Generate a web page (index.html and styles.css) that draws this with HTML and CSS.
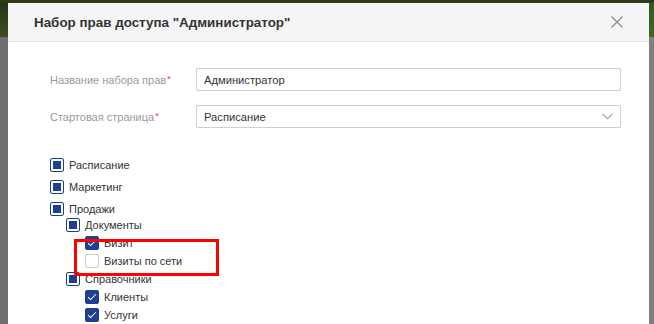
FILE: index.html
```html
<!DOCTYPE html>
<html lang="ru">
<head>
<meta charset="UTF-8">
<title>Набор прав доступа</title>
<link rel="stylesheet" href="styles.css">
</head>
<body>

<div class="backdrop">
  <div class="side side-left"></div>

  <div class="modal">
    <!-- Modal header -->
    <div class="modal-header">
      <h2 class="modal-title">Набор прав доступа "Администратор"</h2>
      <span class="close">
        <svg width="12" height="12" viewBox="0 0 12 12"><path d="M0.5 0.5 L11.5 11.5 M11.5 0.5 L0.5 11.5" stroke="#8a8a8a" stroke-width="1.2" fill="none"/></svg>
      </span>
    </div>

    <div class="modal-body">
      <!-- Form fields -->
      <div class="form-row">
        <label class="form-label">Название набора прав<span class="req">*</span></label>
        <div class="field">Администратор</div>
      </div>
      <div class="form-row">
        <label class="form-label">Стартовая страница<span class="req">*</span></label>
        <div class="field select">
          Расписание
          <svg class="chevron" width="11" height="7" viewBox="0 0 11 7"><path d="M0.5 0.8 L5.5 5.8 L10.5 0.8" stroke="#9a9a9a" stroke-width="1.1" fill="none"/></svg>
        </div>
      </div>

      <!-- Permission tree -->
      <ul class="tree">
        <li class="top"><div class="item"><span class="cb part"></span>Расписание</div></li>
        <li class="top"><div class="item"><span class="cb part"></span>Маркетинг</div></li>
        <li class="top"><div class="item"><span class="cb part"></span>Продажи</div>
          <ul class="sub">
            <li><div class="item"><span class="cb part"></span>Документы</div>
              <ul class="sub sub2">
                <li><div class="item"><span class="cb on"></span>Визит</div></li>
                <li><div class="item"><span class="cb"></span>Визиты по сети</div></li>
              </ul>
            </li>
            <li><div class="item"><span class="cb part"></span>Справочники</div>
              <ul class="sub sub2">
                <li><div class="item"><span class="cb on"></span>Клиенты</div></li>
                <li><div class="item"><span class="cb on"></span>Услуги</div></li>
              </ul>
            </li>
          </ul>
        </li>
      </ul>

      <!-- Highlight frame -->
      <div class="highlight"></div>
    </div>
  </div>

  <div class="side side-right"></div>
</div>

</body>
</html>
```

FILE: styles.css
```css
body {
  margin: 0;
  padding: 0;
  font-family: "Liberation Sans", Arial, sans-serif;
  color: #333;
  background: #7a7a7a;
  overflow: hidden;
}
.backdrop {
  display: flex;
  height: 324px;
  padding-top: 3px;
  box-sizing: border-box;
  background: linear-gradient(to bottom, #2c3a18 0, #2c3a18 3px, transparent 3px);
}
.side {
  flex: 0 0 auto;
  background: linear-gradient(to bottom, #24361a 0, #3d4f20 34px, #707070 34px);
}
.side-left {
  width: 8px;
}
.side-right {
  width: 5px;
  background: linear-gradient(to bottom, #2f5a1c 0, #3f6a22 34px, #808080 34px);
}
.modal {
  flex: 1;
  background: #fff;
  display: flex;
  flex-direction: column;
}
.modal-header {
  height: 39px;
  background: #f5f5f5;
  border-bottom: 1px solid #e3e3e3;
  display: flex;
  align-items: center;
  justify-content: space-between;
  padding: 0 26px 0 26px;
}
.modal-title {
  margin: 0;
  font-size: 13.4px;
  font-weight: bold;
  color: #333;
}
.close {
  display: flex;
}
.modal-body {
  position: relative;
  padding: 26px 28px 0 42px;
  font-size: 11px;
}
.form-row {
  display: flex;
  align-items: center;
  margin-bottom: 14px;
}
.form-label {
  width: 146px;
  color: #9a9a9a;
  font-size: 11px;
}
.req {
  color: #e53935;
  font-size: 9px;
  vertical-align: top;
  margin-left: 1px;
}
.field {
  flex: 1;
  height: 23px;
  border: 1px solid #cfcfcf;
  border-radius: 1px;
  box-sizing: border-box;
  padding: 0 7px;
  display: flex;
  align-items: center;
  color: #333;
  font-size: 11.2px;
}
.select {
  justify-content: space-between;
}
.tree {
  list-style: none;
  margin: 26px 0 0 0;
  padding: 0;
}
.tree ul {
  list-style: none;
  margin: 0;
  padding: 0;
}
.item {
  display: flex;
  align-items: center;
  height: 18px;
  white-space: nowrap;
}
.top > .item {
  height: 22px;
}
.sub {
  margin-top: -4px !important;
  padding-left: 16px !important;
}
.sub2 {
  margin-top: 0 !important;
  padding-left: 19px !important;
}
.cb {
  width: 14px;
  height: 14px;
  box-sizing: border-box;
  border: 1px solid #cdcdcd;
  border-radius: 2px;
  background: #fff;
  margin-right: 5px;
  position: relative;
  flex: 0 0 auto;
}
.cb.part {
  border: 1.5px solid #1d3f96;
}
.cb.part::after {
  content: "";
  position: absolute;
  left: 1.5px;
  top: 1.5px;
  width: 8px;
  height: 8px;
  background: #1d3f96;
}
.cb.on {
  background: #1d3f96;
  border-color: #1d3f96;
}
.cb.on::after {
  content: "";
  position: absolute;
  left: 4px;
  top: 1px;
  width: 3px;
  height: 7px;
  border: solid #fff;
  border-width: 0 1.5px 1.5px 0;
  transform: rotate(45deg);
}
.highlight {
  position: absolute;
  left: 66px;
  top: 197px;
  width: 145px;
  height: 37px;
  border: 3px solid #f00;
  box-sizing: border-box;
}
```
